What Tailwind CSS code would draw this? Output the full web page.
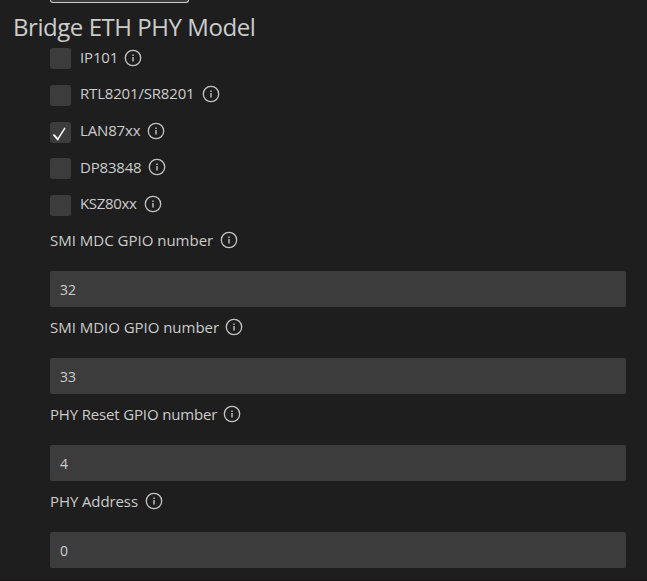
<!DOCTYPE html>
<html lang="en"><head><meta charset="utf-8"><title>Bridge ETH PHY Model</title>
<script src="https://cdn.jsdelivr.net/npm/@tailwindcss/browser@4"></script></head>
<body class="bg-[#1e1e1e] text-[#cccccc] font-['Open_Sans','Noto_Sans',sans-serif]">
<svg class="hidden">
<symbol id="info" viewBox="0 0 18 18"><circle cx="9" cy="9" r="7.7" fill="none" stroke="#c5c5c5" stroke-width="1.3"/><path d="M9 8v4.4M9 5.4v1.5" fill="none" stroke="#c5c5c5" stroke-width="1.4"/></symbol>
</svg>
<main class="h-[581px] overflow-hidden border-b border-[#171315] pl-[50px] pr-[21px]">
<div class="h-[3px] w-[139px] rounded-b-[3px] border border-t-0 border-[#cccccc] bg-[#3c3c3c]"></div>
<h1 class="-ml-[37px] h-[44px] text-[24px] leading-[48px] tracking-[-0.45px] whitespace-nowrap">Bridge ETH PHY Model</h1>
<div class="text-[15px] leading-[18px] whitespace-nowrap">
<label class="flex h-[37px]"><span class="mt-[1px] mr-[9px] size-[21px] shrink-0 rounded-[3px] bg-[#3c3c3c]"></span><span class="w-[44px] leading-[20px] tracking-[-0.15px]">IP101</span><svg class="mt-[1.5px] size-[18px]"><use href="#info"/></svg></label>
<label class="flex h-[37px]"><span class="mt-[1px] mr-[9px] size-[21px] shrink-0 rounded-[3px] bg-[#3c3c3c]"></span><span class="w-[121.5px] tracking-[-0.18px]">RTL8201/SR8201</span><svg class="mt-[0.5px] size-[18px]"><use href="#info"/></svg></label>
<label class="flex h-[37px]"><span class="mt-[1px] mr-[9px] size-[21px] shrink-0 rounded-[3px] bg-[#3c3c3c]"><svg class="size-[21px]" viewBox="0 0 21 21" fill="none" stroke="#ffffff" stroke-linecap="round" stroke-linejoin="round"><path d="M4 13.2l3.7 4.2" stroke-width="2"/><path d="M7.7 17.4L14.7 6.3" stroke-width="1.5"/></svg></span><span class="w-[66.5px] tracking-[-0.15px]">LAN87xx</span><svg class="mt-[0.5px] size-[18px]"><use href="#info"/></svg></label>
<label class="flex h-[36px]"><span class="mr-[9px] size-[21px] shrink-0 rounded-[3px] bg-[#3c3c3c]"></span><span class="w-[67.5px] tracking-[-0.2px]">DP83848</span><svg class="size-[18px]"><use href="#info"/></svg></label>
<label class="flex h-[36px]"><span class="mt-[1px] mr-[9px] size-[21px] shrink-0 rounded-[3px] bg-[#3c3c3c]"></span><span class="w-[63.5px] tracking-[-0.35px]">KSZ80xx</span><svg class="mt-[0.5px] size-[18px]"><use href="#info"/></svg></label>
<div class="h-[87px] pt-[1px]"><div class="flex h-[40px]"><span class="w-[169.5px]">SMI MDC GPIO number</span><svg class="size-[18px]"><use href="#info"/></svg></div><div class="h-[36px] rounded-[2px] bg-[#3c3c3c] pl-[10px] text-[14px] leading-[37px]">32</div></div>
<div class="h-[87px] pt-[1px]"><div class="flex h-[40px]"><span class="w-[175px] tracking-[-0.03px]">SMI MDIO GPIO number</span><svg class="size-[18px]"><use href="#info"/></svg></div><div class="h-[36px] rounded-[2px] bg-[#3c3c3c] pl-[10px] text-[14px] leading-[37px]">33</div></div>
<div class="h-[87px] pt-[1px]"><div class="flex h-[40px]"><span class="w-[173px] tracking-[-0.16px]">PHY Reset GPIO number</span><svg class="size-[18px]"><use href="#info"/></svg></div><div class="h-[36px] rounded-[2px] bg-[#3c3c3c] pl-[10px] text-[14px] leading-[37px]">4</div></div>
<div class="h-[87px] pt-[1px]"><div class="flex h-[40px]"><span class="w-[94.5px] tracking-[-0.1px]">PHY Address</span><svg class="size-[18px]"><use href="#info"/></svg></div><div class="h-[36px] rounded-[2px] bg-[#3c3c3c] pl-[10px] text-[14px] leading-[37px]">0</div></div>
</div></main>
</body></html>
